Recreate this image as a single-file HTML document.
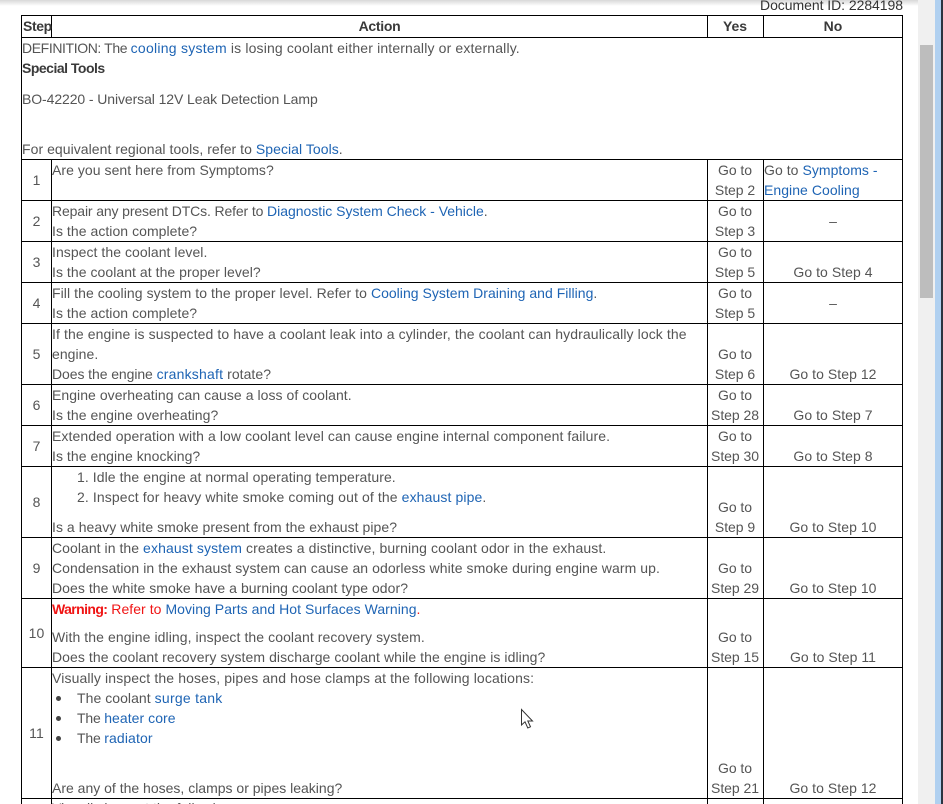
<!DOCTYPE html>
<html style="overflow:hidden;width:943px;height:804px"><head><meta charset="utf-8"><style>
html,body{margin:0;padding:0;background:#fff}
body{width:943px;height:804px;position:relative;overflow:hidden;font-family:"Liberation Sans",sans-serif;font-size:14px;color:#555;letter-spacing:.05px}
.t{position:absolute;white-space:nowrap;line-height:20px;height:20px}
.a{left:52px}
.s{left:22px;width:29px;text-align:center}
.y{left:707px;width:56px;text-align:center;letter-spacing:-.05px}
.n{left:764px;width:138px;text-align:center}
a{color:#1e64b4;text-decoration:none}
b{color:#3a3a3a}
.h{position:absolute;background:#000;height:1px;left:21px;width:882px}
.v{position:absolute;background:#000;width:1px}
</style></head><body>
<div style="position:absolute;left:0;top:0;width:918px;height:6px;background:linear-gradient(#d8d8d8,#fff)"></div>
<div style="position:absolute;left:918px;top:0;width:17px;height:804px;background:#f0f0f0"></div>
<div style="position:absolute;left:920px;top:45px;width:13px;height:253px;background:#bdbdbd"></div>
<div style="position:absolute;left:935px;top:0;width:6px;height:804px;background:#b0d0f0"></div>
<div style="position:absolute;left:941px;top:0;width:2px;height:804px;background:#2b3440"></div>

<div class="t" style="right:40px;top:-5px;color:#333;letter-spacing:-.05px">Document ID: 2284198</div>

<div class="h" style="top:15px"></div><div class="h" style="top:37px"></div><div class="h" style="top:159px"></div>
<div class="h" style="top:200px"></div><div class="h" style="top:241px"></div><div class="h" style="top:282px"></div>
<div class="h" style="top:323px"></div><div class="h" style="top:384px"></div><div class="h" style="top:425px"></div>
<div class="h" style="top:466px"></div><div class="h" style="top:537px"></div><div class="h" style="top:598px"></div>
<div class="h" style="top:667px"></div><div class="h" style="top:798px"></div>
<div class="v" style="left:21px;top:15px;height:789px"></div>
<div class="v" style="left:51px;top:15px;height:23px"></div>
<div class="v" style="left:51px;top:159px;height:645px"></div>
<div class="v" style="left:707px;top:15px;height:23px"></div>
<div class="v" style="left:707px;top:159px;height:645px"></div>
<div class="v" style="left:763px;top:15px;height:23px"></div>
<div class="v" style="left:763px;top:159px;height:645px"></div>
<div class="v" style="left:902px;top:15px;height:789px"></div>

<div class="t" style="left:23px;top:16px;letter-spacing:-.4px"><b>Step</b></div>
<div class="t" style="left:52px;width:655px;text-align:center;top:16px;letter-spacing:-.3px"><b>Action</b></div>
<div class="t y" style="top:16px"><b>Yes</b></div>
<div class="t n" style="top:16px"><b>No</b></div>

<div class="t" style="left:22px;top:38px"><span style="letter-spacing:-.39px">DEFINITION: The </span><a style="letter-spacing:.26px">cooling system</a><span style="letter-spacing:.15px"> is losing coolant either internally or externally.</span></div>
<div class="t" style="left:22px;top:58px;letter-spacing:-.5px"><b>Special Tools</b></div>
<div class="t" style="left:22px;top:89px;letter-spacing:-.09px">BO-42220 - Universal 12V Leak Detection Lamp</div>
<div class="t" style="left:22px;top:139px">For equivalent regional tools, refer to <a>Special Tools</a>.</div>

<div class="t s" style="top:170px">1</div>
<div class="t a" style="top:160px">Are you sent here from Symptoms?</div>
<div class="t y" style="top:160px">Go to</div><div class="t y" style="top:180px">Step 2</div>
<div class="t" style="left:764px;top:160px">Go to <a>Symptoms -</a></div>
<div class="t" style="left:764px;top:180px"><a>Engine Cooling</a></div>

<div class="t s" style="top:211px">2</div>
<div class="t a" style="top:201px"><span style="letter-spacing:-.13px">Repair any present DTCs. Refer to </span><a style="letter-spacing:-.01px">Diagnostic System Check - Vehicle</a>.</div>
<div class="t a" style="top:221px">Is the action complete?</div>
<div class="t y" style="top:201px">Go to</div><div class="t y" style="top:221px">Step 3</div>
<div class="t n" style="top:211px">–</div>

<div class="t s" style="top:252px">3</div>
<div class="t a" style="top:242px">Inspect the coolant level.</div>
<div class="t a" style="top:262px">Is the coolant at the proper level?</div>
<div class="t y" style="top:242px">Go to</div><div class="t y" style="top:262px">Step 5</div>
<div class="t n" style="top:262px">Go to Step 4</div>

<div class="t s" style="top:293px">4</div>
<div class="t a" style="top:283px"><span style="letter-spacing:.07px">Fill the cooling system to the proper level. Refer to </span><a style="letter-spacing:.02px">Cooling System Draining and Filling</a>.</div>
<div class="t a" style="top:303px">Is the action complete?</div>
<div class="t y" style="top:283px">Go to</div><div class="t y" style="top:303px">Step 5</div>
<div class="t n" style="top:293px">–</div>

<div class="t s" style="top:344px">5</div>
<div class="t a" style="top:324px;letter-spacing:.1px">If the engine is suspected to have a coolant leak into a cylinder, the coolant can hydraulically lock the</div>
<div class="t a" style="top:344px">engine.</div>
<div class="t a" style="top:364px"><span style="letter-spacing:-.08px">Does the engine </span><a style="letter-spacing:.2px">crankshaft</a> rotate?</div>
<div class="t y" style="top:344px">Go to</div><div class="t y" style="top:364px">Step 6</div>
<div class="t n" style="top:364px">Go to Step 12</div>

<div class="t s" style="top:395px">6</div>
<div class="t a" style="top:385px">Engine overheating can cause a loss of coolant.</div>
<div class="t a" style="top:405px">Is the engine overheating?</div>
<div class="t y" style="top:385px">Go to</div><div class="t y" style="top:405px">Step 28</div>
<div class="t n" style="top:405px">Go to Step 7</div>

<div class="t s" style="top:436px">7</div>
<div class="t a" style="top:426px;letter-spacing:.08px">Extended operation with a low coolant level can cause engine internal component failure.</div>
<div class="t a" style="top:446px">Is the engine knocking?</div>
<div class="t y" style="top:426px">Go to</div><div class="t y" style="top:446px">Step 30</div>
<div class="t n" style="top:446px">Go to Step 8</div>

<div class="t s" style="top:492px">8</div>
<div class="t" style="left:77px;top:467px;letter-spacing:.07px">1. Idle the engine at normal operating temperature.</div>
<div class="t" style="left:77px;top:487px;letter-spacing:.11px">2. Inspect for heavy white smoke coming out of the <a>exhaust pipe</a>.</div>
<div class="t a" style="top:517px">Is a heavy white smoke present from the exhaust pipe?</div>
<div class="t y" style="top:497px">Go to</div><div class="t y" style="top:517px">Step 9</div>
<div class="t n" style="top:517px">Go to Step 10</div>

<div class="t s" style="top:558px">9</div>
<div class="t a" style="top:538px">Coolant in the <a style="letter-spacing:.12px">exhaust system</a><span style="letter-spacing:.12px"> creates a distinctive, burning coolant odor in the exhaust.</span></div>
<div class="t a" style="top:558px;letter-spacing:.07px">Condensation in the exhaust system can cause an odorless white smoke during engine warm up.</div>
<div class="t a" style="top:578px">Does the white smoke have a burning coolant type odor?</div>
<div class="t y" style="top:558px">Go to</div><div class="t y" style="top:578px">Step 29</div>
<div class="t n" style="top:578px">Go to Step 10</div>

<div class="t s" style="top:623px">10</div>
<div class="t a" style="top:599px;color:#f01414"><b style="color:#f01414;letter-spacing:-.6px">Warning:</b> Refer to <a>Moving Parts and Hot Surfaces Warning</a>.</div>
<div class="t a" style="top:627px;letter-spacing:.08px">With the engine idling, inspect the coolant recovery system.</div>
<div class="t a" style="top:647px;letter-spacing:.07px">Does the coolant recovery system discharge coolant while the engine is idling?</div>
<div class="t y" style="top:627px">Go to</div><div class="t y" style="top:647px">Step 15</div>
<div class="t n" style="top:647px">Go to Step 11</div>

<div class="t s" style="top:723px">11</div>
<div class="t a" style="top:668px;letter-spacing:.13px">Visually inspect the hoses, pipes and hose clamps at the following locations:</div>
<div style="position:absolute;left:56px;top:696px;width:5px;height:5px;border-radius:50%;background:#444"></div>
<div style="position:absolute;left:56px;top:716px;width:5px;height:5px;border-radius:50%;background:#444"></div>
<div style="position:absolute;left:56px;top:736px;width:5px;height:5px;border-radius:50%;background:#444"></div>
<div class="t" style="left:77px;top:688px">The coolant <a style="letter-spacing:.25px">surge tank</a></div>
<div class="t" style="left:77px;top:708px"><span style="letter-spacing:-.2px">The </span><a>heater core</a></div>
<div class="t" style="left:77px;top:728px"><span style="letter-spacing:-.2px">The </span><a style="letter-spacing:.12px">radiator</a></div>
<div class="t a" style="top:778px;letter-spacing:0">Are any of the hoses, clamps or pipes leaking?</div>
<div class="t y" style="top:758px">Go to</div><div class="t y" style="top:778px">Step 21</div>
<div class="t n" style="top:778px">Go to Step 12</div>

<div class="t a" style="top:798px">Visually inspect the following</div>

<svg style="position:absolute;left:519px;top:707px" width="16" height="24" viewBox="0 0 16 24"><path d="M2.5 2.5V18L6 14.8 8.8 21 11.5 19.8 8.8 14H13.5Z" fill="#fff" stroke="#333" stroke-width="1"/></svg>
</body></html>
